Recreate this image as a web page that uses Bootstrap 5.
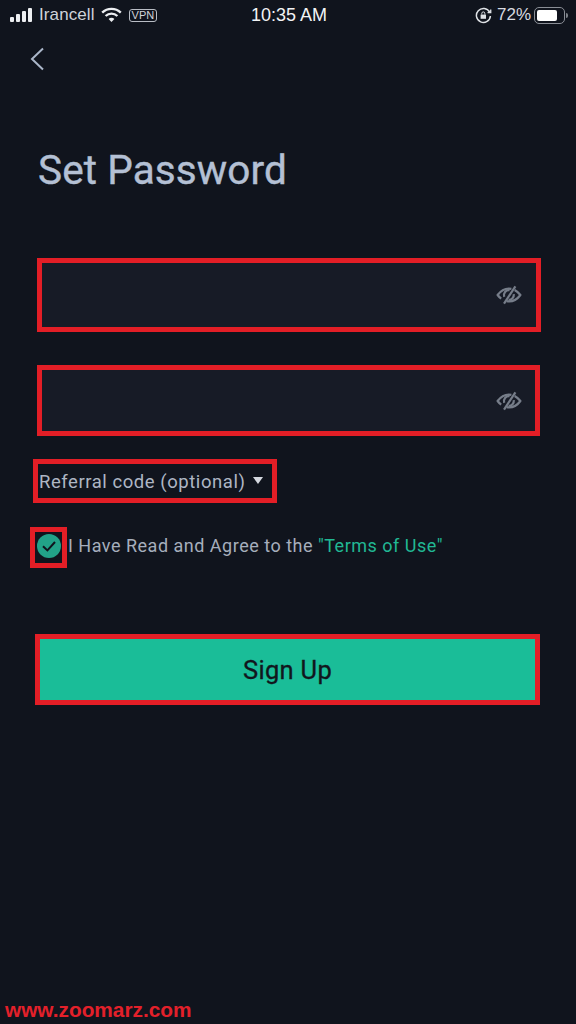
<!DOCTYPE html>
<html lang="en">
<head>
    <meta charset="UTF-8">
    <meta name="viewport" content="width=device-width, initial-scale=1.0">
    <title>Set Password</title>
    <link rel="stylesheet" href="https://cdn.jsdelivr.net/npm/bootstrap@5.3.0/dist/css/bootstrap.min.css">
    <style>
        html, body { height: 100%; }
        body { background: #10141d; color: #aab4c6; font-family: "Inter", "Liberation Sans", sans-serif; width: 576px; height: 1024px; overflow: hidden; }
        .screen { height: 1024px; }
        .status-bar { height: 30px; padding: 0 8px 0 10px; color: #e8eaee; font-family: "Liberation Sans", sans-serif; font-size: 17px; }
        .status-side { width: 220px; }
        .status-time { font-size: 18px; color: #f2f3f5; }
        .carrier { color: #cfd3da; margin-left: 5px; margin-right: 6px; letter-spacing: .1px; }
        .vpn-tag { border: 1.5px solid #b9bdc5; border-radius: 3px; font-size: 11px; line-height: 11px; padding: 0 2px; margin-left: 7px; color: #d0d3d9; }
        .pct { color: #d8dbe0; font-size: 17px; margin: 0 3px 0 5px; }
        .batt { width: 31px; height: 17px; border: 1.5px solid #8a8e96; border-radius: 5px; padding: 2px; }
        .batt-fill { width: 20px; height: 100%; background: #fff; border-radius: 2px; }
        .batt-tip { width: 2px; height: 5px; background: #7d8188; border-radius: 0 2px 2px 0; margin-left: 1px; }
        .back-row { height: 58px; padding-left: 30px; }
        .page-title { font-family: "Roboto", "Liberation Sans", sans-serif; font-size: 40.5px; font-weight: 400; -webkit-text-stroke: .4px #b4c0d4; color: #b4c0d4; line-height: 46px; margin: 59px 0 0; padding: 0 0 0 38px; letter-spacing: .1px; }
        .field-wrap { margin-left: 37px; width: 504px; height: 74px; background: #171b26; border: 5px solid #e31e26; padding-right: 14px; }
        .field-one { margin-top: 65px; }
        .field-two { margin-top: 33px; height: 71px; width: 503px; padding-right: 13px; }
        .field-input { background: transparent; border: 0; outline: 0; flex: 1; min-width: 0; color: #aab4c6; }
        .referral-box { margin: 23px 0 0 33px; width: 244px; height: 44px; border: 5px solid #e31e26; padding: 3px 0 0 1px; font-family: "Roboto", "DejaVu Sans", sans-serif; font-size: 18.5px; letter-spacing: .55px; color: #aeb6c4; white-space: nowrap; }
        .caret-mark { width: 0; height: 0; border-left: 5.5px solid transparent; border-right: 5.5px solid transparent; border-top: 7px solid #d5d9e0; margin-left: 8px; margin-top: -5px; }
        .terms-row { margin: 24px 0 0 30px; font-family: "Roboto", "DejaVu Sans", sans-serif; font-size: 18px; letter-spacing: .5px; color: #a6aebc; white-space: nowrap; }
        .check-box { width: 37px; height: 41px; border: 5px solid #e31e26; }
        .check-icon { margin-bottom: 4px; }
        .terms-text { margin: 0 0 4px 1px; }
        .terms-link { color: #21b894; text-decoration: none; }
        .signup-btn { display: block; margin: 66px 0 0 35px; width: 505px; height: 71px; background: #1abd98; border: 5px solid #e31e26; border-radius: 0; color: #11161d; font-family: "Roboto", "Liberation Sans", sans-serif; font-size: 25.5px; font-weight: 400; -webkit-text-stroke: .3px #11161d; letter-spacing: .3px; padding: 2px 0 0; }
        .signup-btn:hover, .signup-btn:active { background: #1abd98 !important; border-color: #e31e26 !important; color: #11161d !important; }
        .site-mark { position: absolute; left: 5px; bottom: 2px; color: #e3202a; font-family: "Liberation Sans", sans-serif; font-weight: 700; font-size: 20.8px; line-height: 24px; }
    </style>
</head>
<body>
    <div class="screen position-relative">
        <!-- status bar -->
        <div class="status-bar d-flex align-items-center justify-content-between">
            <div class="status-side d-flex align-items-center">
                <svg width="24" height="16" viewBox="0 0 24 16" fill="#eceef1"><rect x="0" y="10" width="4" height="5" rx="1"/><rect x="6" y="7" width="4" height="8" rx="1"/><rect x="12" y="4" width="4" height="11" rx="1"/><rect x="18" y="1" width="4" height="14" rx="1"/></svg>
                <span class="carrier">Irancell</span>
                <svg width="21" height="16" viewBox="0 0 21 16" fill="none" stroke="#eceef1" stroke-width="2.4"><path d="M1.2 5.6C6.4.6 14.6.6 19.8 5.6"/><path d="M4.6 9C8 5.8 13 5.8 16.4 9"/><path d="M10.5 15 7.6 11.9c1.6-1.4 4.2-1.4 5.8 0z" fill="#eceef1" stroke="none"/></svg>
                <span class="vpn-tag">VPN</span>
            </div>
            <div class="status-time">10:35 AM</div>
            <div class="status-side d-flex align-items-center justify-content-end">
                <svg width="17" height="17" viewBox="0 0 17 17" fill="none" stroke="#dfe2e6" stroke-width="1.5"><path d="M14.6 5.2A7 7 0 1 0 15.4 9"/><path d="M12.6 5.6h3.2V2.4" stroke-width="1.2" fill="#dfe2e6"/><rect x="5.6" y="7.6" width="5.4" height="4.2" fill="#dfe2e6" stroke="none"/><path d="M6.8 7.6V6.4a1.5 1.5 0 0 1 3 0v1.2" stroke-width="1"/></svg>
                <span class="pct">72%</span>
                <div class="batt"><div class="batt-fill"></div></div>
                <div class="batt-tip"></div>
            </div>
        </div>

        <!-- back -->
        <div class="back-row d-flex align-items-center">
            <svg width="15" height="24" viewBox="0 0 15 24" fill="none" stroke="#aab6c9" stroke-width="2"><path d="M13 1.5 2 12l11 10.5"/></svg>
        </div>

        <h1 class="page-title">Set Password</h1>

        <div class="field-wrap field-one d-flex align-items-center">
            <input class="field-input" type="password" aria-label="Password">
            <svg width="26" height="22" viewBox="0 0 26 22" fill="none" stroke="#767d89" stroke-width="2.2"><path d="M15.4 4.8C10 3.8 5 6.4 1.6 11c1 1.4 2.2 2.6 3.6 3.6M18.6 6c2.2 1.1 4.1 2.8 5.8 5-3.4 4.6-8.4 7.200-13.800 6.200" stroke-linejoin="round"/><path d="M8.200 12.800A5 5 0 0 1 13.600 6.200"/><path d="M17.800 10.200A5 5 0 0 1 12.600 15.800"/><path d="M19.400 2.400 8 19.600"/></svg>
        </div>

        <div class="field-wrap field-two d-flex align-items-center">
            <input class="field-input" type="password" aria-label="Confirm password">
            <svg width="26" height="22" viewBox="0 0 26 22" fill="none" stroke="#767d89" stroke-width="2.2"><path d="M15.4 4.8C10 3.8 5 6.4 1.6 11c1 1.4 2.2 2.6 3.6 3.6M18.6 6c2.2 1.1 4.1 2.8 5.8 5-3.4 4.6-8.4 7.200-13.800 6.200" stroke-linejoin="round"/><path d="M8.200 12.800A5 5 0 0 1 13.600 6.200"/><path d="M17.800 10.200A5 5 0 0 1 12.600 15.800"/><path d="M19.400 2.400 8 19.600"/></svg>
        </div>

        <div class="referral-box d-flex align-items-center">
            <span>Referral code (optional)</span><span class="caret-mark"></span>
        </div>

        <div class="terms-row d-flex align-items-center">
            <div class="check-box d-flex align-items-center justify-content-center">
                <svg class="check-icon" width="24" height="24" viewBox="0 0 24 24"><circle cx="12" cy="12" r="12" fill="#22a288"/><path d="M6 12.200 10.400 16.400 18 8" fill="none" stroke="#10141d" stroke-width="2"/></svg>
            </div>
            <span class="terms-text">I Have Read and Agree to the <a class="terms-link" href="#">"Terms of Use"</a></span>
        </div>

        <button class="btn signup-btn" type="button">Sign Up</button>

        <div class="site-mark">www.zoomarz.com</div>
    </div>

    <script src="https://cdn.jsdelivr.net/npm/bootstrap@5.3.0/dist/js/bootstrap.bundle.min.js"></script>
</body>
</html>
